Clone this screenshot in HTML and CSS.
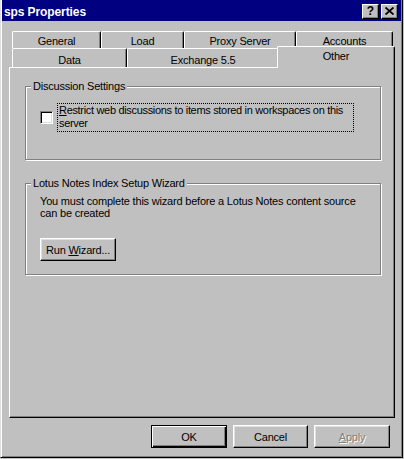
FILE: index.html
```html
<!DOCTYPE html>
<html>
<head>
<meta charset="utf-8">
<link rel="stylesheet" href="styles.css">
</head>
<body>
<div class="window">
  <div class="titlebar">
    <span class="title">sps Properties</span>
    <div class="tbtns">
      <span class="tbtn help">?</span>
      <span class="tbtn close"><svg width="9" height="8" viewBox="0 0 9 8"><path d="M0.5 0.5 L8.5 7.5 M8.5 0.5 L0.5 7.5" stroke="#000" stroke-width="1.8" fill="none"/></svg></span>
    </div>
  </div>
  <div class="content">
    <div class="tabs">
      <div class="tabrow row1">
        <div class="tab t-general">General</div>
        <div class="tab t-load">Load</div>
        <div class="tab t-proxy">Proxy Server</div>
        <div class="tab t-accounts">Accounts</div>
      </div>
      <div class="tabrow row2">
        <div class="tab t-data">Data</div>
        <div class="tab t-exchange">Exchange 5.5</div>
        <div class="tab t-other selected">Other</div>
      </div>
    </div>
    <div class="panel">
      <fieldset class="group g1">
        <legend>Discussion Settings</legend>
        <div class="check-row">
          <span class="checkbox"></span>
          <span class="check-label"><u>R</u>estrict web discussions to items stored in workspaces on this server</span>
        </div>
      </fieldset>
      <fieldset class="group g2">
        <legend>Lotus Notes Index Setup Wizard</legend>
        <p class="desc">You must complete this wizard before a Lotus Notes content source can be created</p>
        <button class="btn wizard">Run <u>W</u>izard...</button>
      </fieldset>
    </div>
    <div class="actions">
      <button class="btn default">OK</button>
      <button class="btn cancel">Cancel</button>
      <button class="btn disabled"><u>A</u>pply</button>
    </div>
  </div>
</div>
</body>
</html>
```
FILE: styles.css
```css
html, body {
  margin: 0;
  padding: 0;
  background: #c0c0c0;
}
body {
  font-family: "Liberation Sans", Arial, sans-serif;
  font-size: 11px;
  letter-spacing: -0.2px;
  color: #000;
}
.window {
  width: 403px;
  height: 458px;
  box-sizing: border-box;
  background: #c0c0c0;
  border-style: solid;
  border-width: 0 1px 1px 1px;
  border-color: #000 #000 #000 #dfdfdf;
  box-shadow: inset 1px 0 #fff, inset -1px -1px #808080;
  padding: 0 1px 1px 1px;
  display: flex;
  flex-direction: column;
}
.titlebar {
  height: 21px;
  background: #000080;
  display: flex;
  align-items: center;
  justify-content: space-between;
  padding: 0 3px 0 2px;
}
.title {
  color: #fff;
  font-weight: bold;
  font-size: 12px;
  letter-spacing: -0.1px;
  padding-top: 2px;
}
.tbtns {
  display: flex;
  gap: 2px;
  padding-top: 1px;
}
.tbtn {
  width: 17px;
  height: 15px;
  box-sizing: border-box;
  background: #c0c0c0;
  border: 1px solid;
  border-color: #fff #000 #000 #fff;
  box-shadow: inset -1px -1px #808080;
  display: flex;
  align-items: center;
  justify-content: center;
  font-weight: bold;
  font-size: 12px;
  line-height: 12px;
  letter-spacing: 0;
}
.content {
  flex: 1;
  display: flex;
  flex-direction: column;
  padding: 10px 6px 0 7px;
}
.tabrow {
  display: flex;
  margin-left: 3px;
}
.row1 { height: 17px; }
.row2 { height: 19px; align-items: flex-end; }
.tab {
  box-sizing: border-box;
  height: 100%;
  border-top: 1px solid #fff;
  border-left: 1px solid #fff;
  border-right: 1px solid #000;
  box-shadow: inset -1px 0 #808080;
  border-radius: 2px 2px 0 0;
  display: flex;
  align-items: center;
  justify-content: center;
  background: #c0c0c0;
  padding-top: 1px;
}
.row2 .tab { padding-top: 3px; }
.t-general { width: 89px; }
.t-load { width: 83px; }
.t-proxy { width: 112px; }
.t-accounts { width: 97px; }
.t-data { width: 115px; }
.t-exchange { width: 152px; }
.t-other { width: 114px; }
.tab.selected {
  position: relative;
  z-index: 1;
  width: 118px;
  height: 22px;
  margin: -2px -2px -1px -2px;
  align-items: flex-start;
  padding-top: 3px;
}
.panel {
  width: 386px;
  height: 351px;
  box-sizing: border-box;
  border-style: solid;
  border-width: 1px;
  border-color: #fff #000 #000 #fff;
  box-shadow: inset -1px -1px #808080;
  padding: 12px 0 0 15px;
}
.group {
  width: 356px;
  box-sizing: border-box;
  margin: 0;
  padding: 0 0 0 14px;
  border: 1px solid #808080;
  box-shadow: inset 1px 1px #fff, 1px 1px #fff;
  min-width: 0;
}
.group legend {
  margin-left: -9px;
  padding: 0 2px;
  line-height: 13px;
  background: #c0c0c0;
}
.g1 { padding-bottom: 27px; }
.check-row {
  margin-top: 10px;
  display: flex;
  align-items: center;
  gap: 4px;
}
.checkbox {
  width: 13px;
  height: 13px;
  box-sizing: border-box;
  background: #fff;
  border: 1px solid;
  border-color: #808080 #fff #fff #808080;
  box-shadow: inset 1px 1px #000, inset -1px -1px #dfdfdf;
  flex: none;
}
.check-label {
  width: 297px;
  box-sizing: border-box;
  border: 1px dotted #000;
  padding: 0 1px 1px 1px;
  line-height: 13px;
  letter-spacing: -0.32px;
}
.g2 {
  margin-top: 17px;
  padding-bottom: 13px;
}
.desc {
  margin: 5px 0 0 0;
  width: 330px;
  line-height: 12px;
}
.btn {
  font-family: inherit;
  font-size: 11px;
  letter-spacing: -0.2px;
  color: #000;
  background: #c0c0c0;
  height: 23px;
  width: 75px;
  box-sizing: border-box;
  border: 1px solid;
  border-color: #fff #000 #000 #fff;
  box-shadow: inset -1px -1px #808080, inset 1px 1px #dfdfdf;
  padding: 0;
  display: block;
}
.wizard {
  width: 76px;
  margin-top: 19px;
}
.actions {
  display: flex;
  justify-content: flex-end;
  gap: 6px;
  margin-top: 7px;
  padding-right: 5px;
}
.btn.default {
  width: 76px;
  border: 1px solid #000;
  box-shadow: inset 1px 1px #fff, inset -1px -1px #000, inset -2px -2px #808080;
}
.btn.disabled {
  width: 76px;
  color: #808080;
  text-shadow: 1px 1px #fff;
}
```
